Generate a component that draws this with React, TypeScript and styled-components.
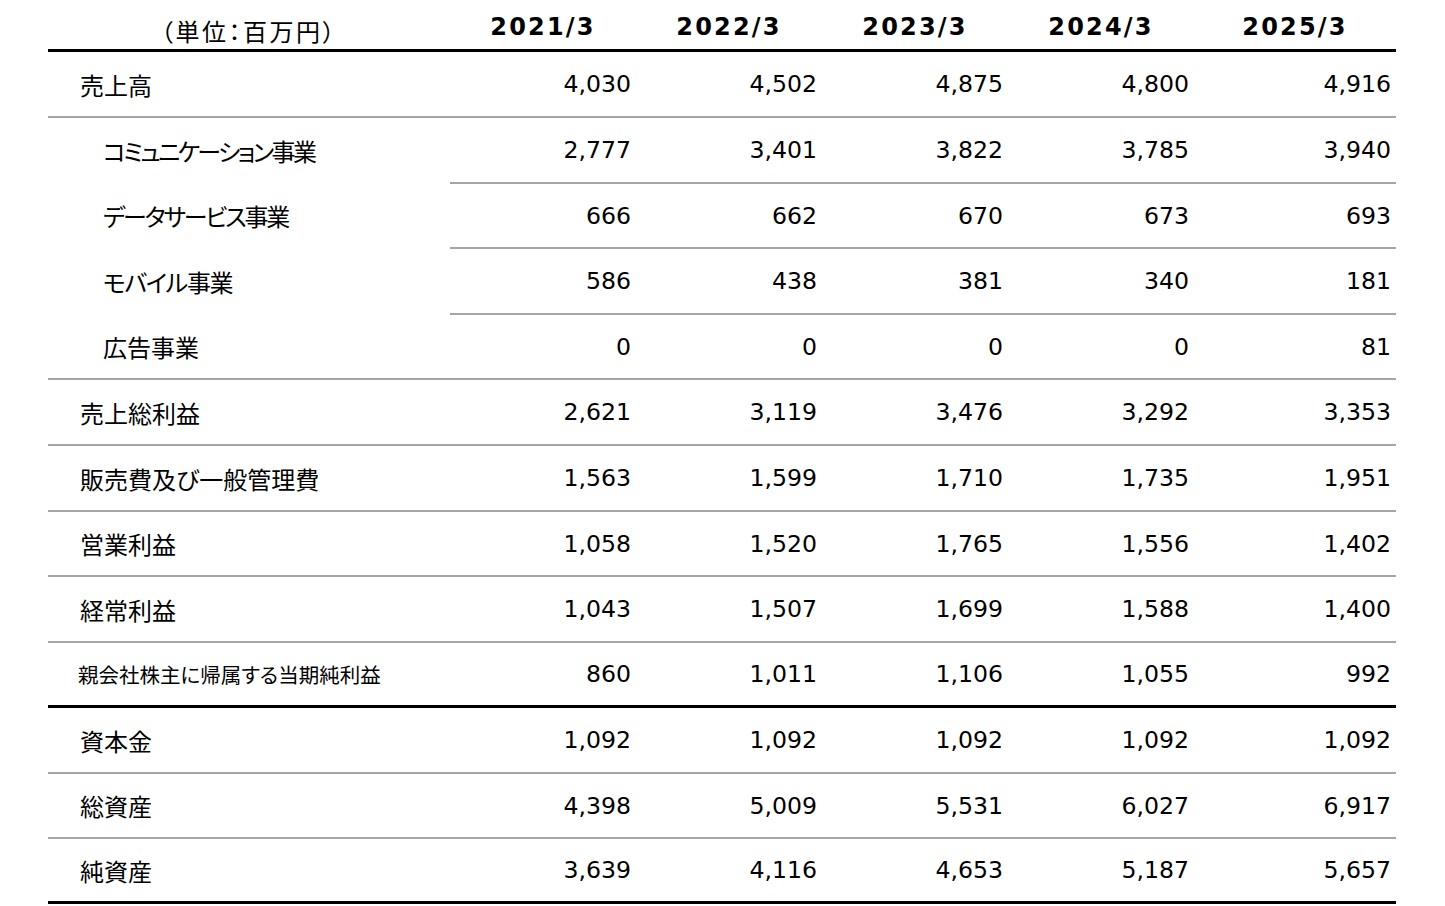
import React from "react";
import styled, { createGlobalStyle } from "styled-components";

const Global = createGlobalStyle`
  html, body { margin: 0; padding: 0; background: #fff; }
  body { font-family: "DejaVu Sans", "Noto Sans CJK JP", sans-serif; color: #000; }
`;

const Page = styled.div`
  width: 1445px;
  height: 906px;
  padding-left: 48px;
  box-sizing: border-box;
  overflow: hidden;
`;

const Grid = styled.div`
  width: 1348px;
  display: grid;
  grid-template-columns: 402px repeat(4, 186px) 202px;
`;

type Line = "gray" | "black" | "none";

const HeadCell = styled.div<{ $label?: boolean }>`
  border-bottom: 3px solid #000;
  display: flex;
  align-items: center;
  justify-content: center;
  box-sizing: content-box;
  padding-top: ${(p) => (p.$label ? "11px" : "4px")};
  height: ${(p) => (p.$label ? "38px" : "45px")};
  font-family: ${(p) => (p.$label ? `"Noto Sans CJK JP", sans-serif` : `"DejaVu Sans", sans-serif`)};
  font-weight: ${(p) => (p.$label ? 400 : 700)};
  font-size: 24px;
  letter-spacing: ${(p) => (p.$label ? "2.5px" : "2.2px")};
  font-feature-settings: "palt";
`;

const Cell = styled.div<{ $line: Line; $h: number }>`
  height: ${(p) => p.$h}px;
  border-bottom: ${(p) =>
    p.$line === "gray" ? "2px solid #a6a6a6" : p.$line === "black" ? "3px solid #000" : "2px solid transparent"};
  display: flex;
  align-items: center;
  box-sizing: content-box;
`;

const LabelCell = styled(Cell)<{ $indent: number; $size: number; $ls: number }>`
  padding-left: ${(p) => p.$indent}px;
  font-family: "Noto Sans CJK JP", sans-serif;
  font-size: ${(p) => p.$size}px;
  letter-spacing: ${(p) => p.$ls}px;
  font-feature-settings: "palt";
  white-space: nowrap;
`;

const NumCell = styled(Cell)`
  justify-content: flex-end;
  padding-right: 5px;
  font-family: "DejaVu Sans", sans-serif;
  font-size: 23.6px;
`;

type RowData = {
  label: string;
  values: string[];
  sub?: boolean;
  small?: boolean;
  line: Line;
  labelLine?: Line;
  h: number;
  ls?: number;
};

const rows: RowData[] = [
  { label: "売上高", values: ["4,030", "4,502", "4,875", "4,800", "4,916"], line: "gray", h: 64 },
  { label: "コミュニケーション事業", values: ["2,777", "3,401", "3,822", "3,785", "3,940"], sub: true, line: "gray", labelLine: "none", h: 64, ls: -2.6 },
  { label: "データサービス事業", values: ["666", "662", "670", "673", "693"], sub: true, line: "gray", labelLine: "none", h: 63, ls: -2.2 },
  { label: "モバイル事業", values: ["586", "438", "381", "340", "181"], sub: true, line: "gray", labelLine: "none", h: 64, ls: -1.3 },
  { label: "広告事業", values: ["0", "0", "0", "0", "81"], sub: true, line: "gray", h: 63 },
  { label: "売上総利益", values: ["2,621", "3,119", "3,476", "3,292", "3,353"], line: "gray", h: 64 },
  { label: "販売費及び一般管理費", values: ["1,563", "1,599", "1,710", "1,735", "1,951"], line: "gray", h: 64 },
  { label: "営業利益", values: ["1,058", "1,520", "1,765", "1,556", "1,402"], line: "gray", h: 63 },
  { label: "経常利益", values: ["1,043", "1,507", "1,699", "1,588", "1,400"], line: "gray", h: 64 },
  { label: "親会社株主に帰属する当期純利益", values: ["860", "1,011", "1,106", "1,055", "992"], small: true, line: "black", h: 62 },
  { label: "資本金", values: ["1,092", "1,092", "1,092", "1,092", "1,092"], line: "gray", h: 64 },
  { label: "総資産", values: ["4,398", "5,009", "5,531", "6,027", "6,917"], line: "gray", h: 63 },
  { label: "純資産", values: ["3,639", "4,116", "4,653", "5,187", "5,657"], line: "black", h: 62 },
];

const years = ["2021/3", "2022/3", "2023/3", "2024/3", "2025/3"];

export default function App() {
  return (
    <Page>
      <Global />
      <Grid>
        <HeadCell $label>（単位：百万円）</HeadCell>
        {years.map((y) => (
          <HeadCell key={y}>{y}</HeadCell>
        ))}
        {rows.map((r) => (
          <React.Fragment key={r.label}>
            <LabelCell
              $line={r.labelLine ?? r.line}
              $h={r.h}
              $indent={r.sub ? 55 : r.small ? 30 : 32}
              $size={r.small ? 20.5 : 24}
              $ls={r.ls ?? 0}
            >
              {r.label}
            </LabelCell>
            {r.values.map((v, i) => (
              <NumCell key={i} $line={r.line} $h={r.h}>
                {v}
              </NumCell>
            ))}
          </React.Fragment>
        ))}
      </Grid>
    </Page>
  );
}
